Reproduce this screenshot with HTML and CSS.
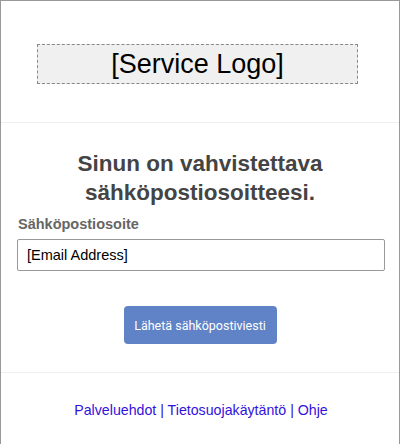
FILE: index.html
```html
<!DOCTYPE html>
<html lang="fi">
<head>
<meta charset="utf-8">
<title>Vahvista sähköpostiosoite</title>
<link rel="stylesheet" href="styles.css">
</head>
<body>
<div class="page">
  <header class="header">
    <div class="logo">[Service Logo]</div>
  </header>
  <main class="main">
    <h1 class="title">Sinun on vahvistettava sähköpostiosoitteesi.</h1>
    <label class="label" for="email">Sähköpostiosoite</label>
    <div class="input" id="email">[Email Address]</div>
    <div class="actions">
      <button class="btn" type="button">Lähetä sähköpostiviesti</button>
    </div>
  </main>
  <footer class="footer">
    <a href="#" class="link">Palveluehdot</a> | <a href="#" class="link">Tietosuojakäytäntö</a> | <a href="#" class="link">Ohje</a>
  </footer>
</div>
</body>
</html>
```
FILE: styles.css
```css
html, body {
  margin: 0;
  padding: 0;
  background: #fff;
}
body {
  font-family: "Liberation Sans", Arial, sans-serif;
}
.page {
  width: 400px;
  box-sizing: border-box;
  border: 1px solid #999;
  border-bottom: none;
  min-height: 460px;
}
.header {
  height: 122px;
  border-bottom: 1px solid #eee;
  padding-top: 43px;
  box-sizing: border-box;
}
.logo {
  margin-left: 36px;
  width: 321px;
  height: 40px;
  box-sizing: border-box;
  border: 1px dashed #888;
  background: #f0f0f0;
  color: #000;
  font-size: 27px;
  line-height: 38px;
  text-align: center;
}
.main {
  padding: 26px 16px 0 16px;
  height: 250px;
  box-sizing: border-box;
  border-bottom: 1px solid #eee;
  display: flex;
  flex-direction: column;
}
.title {
  margin: 0;
  font-size: 22.5px;
  line-height: 29px;
  font-weight: bold;
  color: #444;
  text-align: center;
}
.label {
  margin-top: 9px;
  margin-left: 1px;
  font-size: 14.5px;
  font-weight: bold;
  color: #666;
  line-height: 17px;
}
.input {
  margin-top: 6px;
  width: 368px;
  height: 32px;
  box-sizing: border-box;
  border: 1px solid #999;
  border-radius: 2px;
  padding-left: 9px;
  font-size: 14.5px;
  line-height: 30px;
  color: #000;
}
.actions {
  margin-top: 35px;
  display: flex;
  justify-content: center;
}
.btn {
  width: 153px;
  height: 38px;
  border: none;
  border-radius: 4px;
  background: #6082c6;
  color: #fff;
  font-family: Roboto, "Open Sans", sans-serif;
  font-size: 12.5px;
  padding: 0;
}
.footer {
  padding-top: 29px;
  padding-left: 2px;
  text-align: center;
  font-size: 14.2px;
  color: #3311dd;
  line-height: 17px;
}
.link {
  color: #3311dd;
  text-decoration: none;
}
```
